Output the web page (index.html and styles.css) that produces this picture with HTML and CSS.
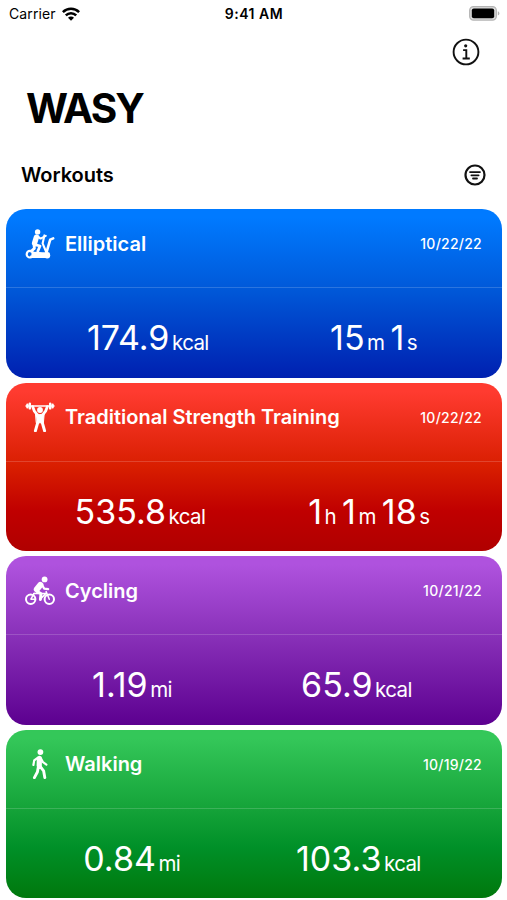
FILE: index.html
```html
<!DOCTYPE html>
<html lang="en">
<head>
    <meta charset="UTF-8">
    <meta name="viewport" content="width=device-width, initial-scale=1.0">
    <title>WASY</title>
    <link rel="stylesheet" href="styles.css">
</head>
<body>
    <div class="status">
        <div class="carrier">
            <span>Carrier</span>
            <svg class="wifi" viewBox="0 0 18 14" fill="none" stroke="#000" stroke-width="2.5">
                <path d="M.9 5.1a11.4 11.4 0 0 1 16.2 0"/>
                <path d="M3.8 8.4a7.3 7.3 0 0 1 10.4 0"/>
                <path d="M9 13.8L6 10.8a4.2 4.2 0 0 1 6 0z" fill="#000" stroke="none"/>
            </svg>
        </div>
        <div class="time">9:41 AM</div>
        <svg class="battery" viewBox="0 0 31 15">
            <rect x=".7" y=".7" width="26.6" height="13.4" rx="3.8" fill="#ddd" stroke="#b4b4b4" stroke-width="1.3"/>
            <rect x="2.8" y="2.6" width="22.4" height="9.6" rx="2" fill="#000"/>
            <path d="M28.8 5.2q1.6.6 1.6 2.2t-1.6 2.2z" fill="#b4b4b4"/>
        </svg>
    </div>

    <div class="toolbar">
        <svg class="info" viewBox="0 0 28 28" fill="none" stroke="#111" stroke-width="1.9">
            <circle cx="14" cy="14" r="12.4"/>
            <circle cx="13.7" cy="7.8" r="1.6" fill="#111" stroke="none"/>
            <path d="M11.1 12.1h3.2v8.4M10.6 20.5h7.2"/>
        </svg>
    </div>

    <h1 class="title">WASY</h1>

    <div class="section">
        <h2>Workouts</h2>
        <svg class="filter" viewBox="0 0 22 22" fill="none" stroke="#111" stroke-width="1.8" stroke-linecap="round">
            <circle cx="11" cy="11" r="9.5" stroke-width="2.2"/>
            <path d="M6 8.1h10M7.4 11.3h7.2M9 14.5h4"/>
        </svg>
    </div>

    <div class="list">
        <div class="card blue">
            <div class="head">
                <svg class="icon" viewBox="0 0 30 30" fill="none" stroke="#fff" stroke-linecap="round" stroke-linejoin="round">
                    <circle cx="12.6" cy="2.9" r="2.7" fill="#fff" stroke="none"/>
                    <path d="M11.4 8.2L9.6 14" stroke-width="5.4"/>
                    <path d="M13 7.6l2.6 2 5.2-2.8" stroke-width="2"/>
                    <path d="M9.8 15.6l5.2 1.4-2.2 5.2M9 16l.4 3.4-3.2 2.8" stroke-width="2.8"/>
                    <path d="M19.4 6.4l-1.8 8 3.6 8.6" stroke-width="2.1"/>
                    <path d="M28.2 9.4l-3 1.2-3.6 12.6" stroke-width="2.6"/>
                    <circle cx="5" cy="25.2" r="3.3" stroke-width="2.2"/>
                    <path d="M7.6 24l6.4.2 3.4.4h6M7.6 25.8h14" stroke-width="2.6"/>
                    <path d="M6.4 27.6h16.2" stroke-width="2.6"/>
                    <circle cx="22.2" cy="26.4" r="3" fill="#fff" stroke="none"/>
                </svg>
                <h3>Elliptical</h3>
                <span class="date">10/22/22</span>
            </div>
            <div class="metrics">
                <div class="metric">174.9<small>kcal</small></div>
                <div class="metric">15<small>m</small> 1<small>s</small></div>
            </div>
        </div>

        <div class="card red">
            <div class="head">
                <svg class="icon" viewBox="0 0 30 30" fill="none" stroke="#fff" stroke-linecap="round" stroke-linejoin="round">
                    <path d="M1 4h28" stroke-width="1.5"/>
                    <path d="M2.4 2.8v2.4M27.6 2.8v2.4" stroke-width="2.4"/>
                    <path d="M4.8 1.6v4.8M25.2 1.6v4.8" stroke-width="2.4"/>
                    <circle cx="15" cy="8" r="2.9" fill="#fff" stroke="none"/>
                    <path d="M7.6 4.6l1.8 4.6 3 3.8M22.4 4.6l-1.8 4.6-3 3.8" stroke-width="2.8"/>
                    <path d="M10.8 11.8q4.2 1.8 8.4 0l-.8 9h-6.8z" fill="#fff" stroke-width="1"/>
                    <path d="M13 19.6L10.4 28.8M17 19.6l2.6 9.2" stroke-width="3"/>
                </svg>
                <h3>Traditional Strength Training</h3>
                <span class="date">10/22/22</span>
            </div>
            <div class="metrics">
                <div class="metric">535.8<small>kcal</small></div>
                <div class="metric">1<small>h</small> 1<small>m</small> 18<small>s</small></div>
            </div>
        </div>

        <div class="card purple">
            <div class="head">
                <svg class="icon" viewBox="0 0 30 30" fill="none" stroke="#fff" stroke-linecap="round" stroke-linejoin="round">
                    <circle cx="19.6" cy="3.4" r="2.9" fill="#fff" stroke="none"/>
                    <circle cx="5.7" cy="23.2" r="4.7" stroke-width="2"/>
                    <circle cx="24.3" cy="23.2" r="4.7" stroke-width="2"/>
                    <path d="M15.4 8.8l-3.6 4.6" stroke-width="6"/>
                    <path d="M17 8.8l2.2 3.8 4 .6" stroke-width="2.2"/>
                    <path d="M12 15.4l4 2.4-.6 5.6" stroke-width="3"/>
                    <path d="M5.9 23.2l3.4-6M8.6 17.6h13M15 23.4l6-6M24.3 23.2l-3.2-7.6M6 23.2h3.6" stroke-width="1.5"/>
                </svg>
                <h3>Cycling</h3>
                <span class="date">10/21/22</span>
            </div>
            <div class="metrics">
                <div class="metric">1.19<small>mi</small></div>
                <div class="metric">65.9<small>kcal</small></div>
            </div>
        </div>

        <div class="card green">
            <div class="head">
                <svg class="icon" viewBox="0 0 30 30" fill="none" stroke="#fff" stroke-linecap="round" stroke-linejoin="round">
                    <circle cx="15.4" cy="3.1" r="2.9" fill="#fff" stroke="none"/>
                    <path d="M14.4 9.4l-.2 7.4" stroke-width="5.2"/>
                    <path d="M12.6 8.8l-3.4 2.6-.8 4.6M16 9.4l2 3.8 3.4 2.4" stroke-width="2.2"/>
                    <path d="M13.4 17.6l-1 5.4-3 5.6M14.8 17l3.8 4.8 1.2 6.8" stroke-width="2.9"/>
                </svg>
                <h3>Walking</h3>
                <span class="date">10/19/22</span>
            </div>
            <div class="metrics">
                <div class="metric">0.84<small>mi</small></div>
                <div class="metric">103.3<small>kcal</small></div>
            </div>
        </div>
    </div>
</body>
</html>
```
FILE: styles.css
```css
* {
    box-sizing: border-box;
}
body {
    margin: 0;
    height: 900px;
    overflow: hidden;
    background: #fff;
    color: #000;
    font-family: Inter, "Liberation Sans", sans-serif;
}
h1, h2, h3 {
    margin: 0;
}
svg {
    display: block;
    flex: none;
}
/* status bar */
.status {
    display: grid;
    grid-template-columns: 1fr auto 1fr;
    align-items: center;
    height: 27px;
    padding: 0 7px 0 9px;
    font-size: 14px;
}
.carrier {
    display: flex;
    align-items: center;
    gap: 6px;
    letter-spacing: .1px;
}
.wifi {
    width: 18px;
    height: 14px;
}
.time {
    margin-right: 1px;
    font-weight: 600;
    letter-spacing: .5px;
}
.battery {
    width: 31px;
    height: 15px;
    justify-self: end;
}
/* page header */
.toolbar {
    display: flex;
    justify-content: flex-end;
    height: 52px;
    padding: 11px 27px 0 0;
}
.info {
    width: 28px;
    height: 28px;
}
.title {
    height: 60px;
    padding-left: 26px;
    font-size: 40.5px;
    line-height: 60px;
    font-weight: 700;
    letter-spacing: -2px;
}
.section {
    display: flex;
    align-items: center;
    justify-content: space-between;
    height: 70px;
    padding: 2px 21px 0 21px;
}
.section h2 {
    font-size: 20px;
    font-weight: 600;
    letter-spacing: -.05px;
}
.filter {
    width: 22px;
    height: 22px;
}
/* cards */
.list {
    display: flex;
    flex-direction: column;
    gap: 5px;
    padding: 0 5px 0 6px;
}
.card {
    height: 168.5px;
    border-radius: 20px;
    color: #fff;
}
.head {
    display: flex;
    align-items: center;
    height: 79px;
    padding: 0 20px 9px 19px;
    border-bottom: 1.5px solid rgba(255, 255, 255, .17);
}
.icon {
    width: 30px;
    height: 30px;
}
.head h3 {
    flex: 1;
    padding-left: 10px;
    font-size: 20px;
    line-height: 26px;
    font-weight: 600;
}
.date {
    font-size: 14px;
    font-weight: 500;
    letter-spacing: .25px;
}
.metrics {
    display: grid;
    grid-template-columns: 2fr auto 3fr auto 2fr;
    padding: 29px 4px 0 0;
}
.metric {
    grid-column: 2;
    grid-row: 1;
    font-size: 34px;
    line-height: 42px;
    font-weight: 400;
    white-space: nowrap;
    word-spacing: -3.5px;
}
.metric + .metric {
    grid-column: 4;
}
.metric small {
    margin-left: 2.5px;
    font-size: 20.5px;
    letter-spacing: -.6px;
}
.blue {
    background: linear-gradient(#007aff 5%, #0058d8 48%, #0020b0);
}
.red {
    background: linear-gradient(#ff3b30 5%, #d81e00 50%, #c00000 76%, #b00000);
}
.purple {
    background: linear-gradient(#af52de 5%, #8830b8 48%, #5c0090);
}
.green {
    background: linear-gradient(#34c759 5%, #14a238 48%, #009028 70%, #00780c);
}
```
